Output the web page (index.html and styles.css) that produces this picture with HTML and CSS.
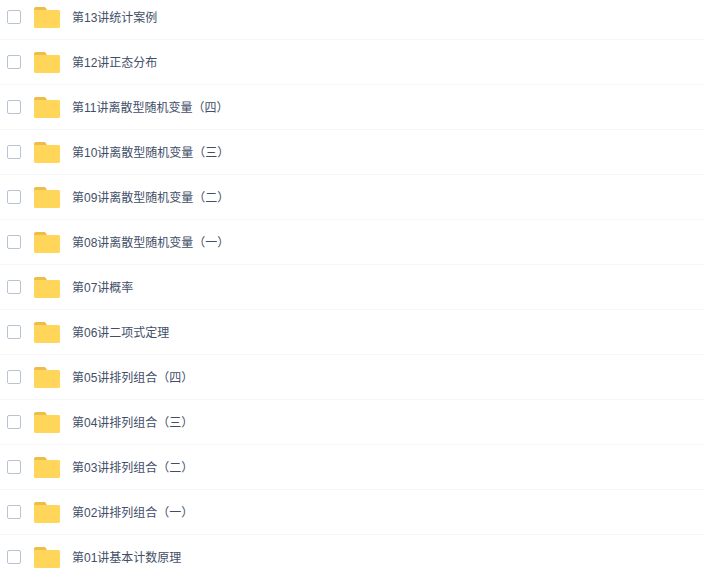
FILE: index.html
```html
<!DOCTYPE html>
<html lang="en">
<head>
    <meta charset="UTF-8">
    <title>文件列表</title>
    <link rel="stylesheet" href="styles.css">
</head>
<body>
    <svg class="defs" width="0" height="0">
        <symbol id="folder" viewBox="0 0 26 21">
            <path d="M0 2C0 .9.9 0 2 0h8c1 0 1.500.5 1.900 1.200L13 3H0z" fill="#eebc4b"/>
            <path d="M0 3h24.500c.9 0 1.500.6 1.500 1.500v15c0 .9-.6 1.500-1.500 1.500h-23C.6 21 0 20.400 0 19.500z" fill="#ffd659"/>
        </symbol>
    </svg>
    <ul class="file-list">
        <li class="file-row"><span class="check"></span><svg class="folder"><use href="#folder"/></svg><span class="name">第13讲统计案例</span></li>
        <li class="file-row"><span class="check"></span><svg class="folder"><use href="#folder"/></svg><span class="name">第12讲正态分布</span></li>
        <li class="file-row"><span class="check"></span><svg class="folder"><use href="#folder"/></svg><span class="name">第11讲离散型随机变量（四）</span></li>
        <li class="file-row"><span class="check"></span><svg class="folder"><use href="#folder"/></svg><span class="name">第10讲离散型随机变量（三）</span></li>
        <li class="file-row"><span class="check"></span><svg class="folder"><use href="#folder"/></svg><span class="name">第09讲离散型随机变量（二）</span></li>
        <li class="file-row"><span class="check"></span><svg class="folder"><use href="#folder"/></svg><span class="name">第08讲离散型随机变量（一）</span></li>
        <li class="file-row"><span class="check"></span><svg class="folder"><use href="#folder"/></svg><span class="name">第07讲概率</span></li>
        <li class="file-row"><span class="check"></span><svg class="folder"><use href="#folder"/></svg><span class="name">第06讲二项式定理</span></li>
        <li class="file-row"><span class="check"></span><svg class="folder"><use href="#folder"/></svg><span class="name">第05讲排列组合（四）</span></li>
        <li class="file-row"><span class="check"></span><svg class="folder"><use href="#folder"/></svg><span class="name">第04讲排列组合（三）</span></li>
        <li class="file-row"><span class="check"></span><svg class="folder"><use href="#folder"/></svg><span class="name">第03讲排列组合（二）</span></li>
        <li class="file-row"><span class="check"></span><svg class="folder"><use href="#folder"/></svg><span class="name">第02讲排列组合（一）</span></li>
        <li class="file-row"><span class="check"></span><svg class="folder"><use href="#folder"/></svg><span class="name">第01讲基本计数原理</span></li>
    </ul>
</body>
</html>
```

FILE: styles.css
```css
html, body {
    height: 100%;
    overflow: hidden;
}

body {
    font-family: "Liberation Sans", "Noto Sans CJK SC", sans-serif;
    margin: 0;
    padding: 0;
    background-color: #fff;
}

.defs {
    display: block;
    height: 0;
}

/* File list */
.file-list {
    list-style: none;
    margin: -5px 0 0;
    padding: 0;
}

.file-row {
    display: flex;
    align-items: center;
    box-sizing: border-box;
    height: 45px;
    padding-left: 7px;
    border-bottom: 1px solid #f5f6f9;
}

.check {
    box-sizing: border-box;
    width: 14px;
    height: 14px;
    margin-right: 13px;
    border: 1px solid #b9c4d2;
    border-radius: 2px;
    background-color: #fff;
}

.folder {
    width: 26px;
    height: 21px;
    margin-right: 12px;
}

.name {
    margin-bottom: 2px;
    font-size: 12px;
    color: #424e67;
}
```
